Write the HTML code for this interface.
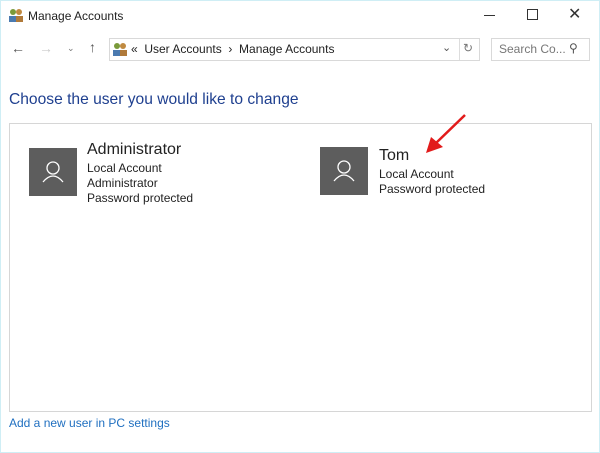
<!DOCTYPE html>
<html><head><style>
body{margin:0;width:600px;height:453px;background:#fff;font-family:"Liberation Sans",sans-serif;position:relative;overflow:hidden;border:1px solid #cfeef5;box-sizing:border-box}
.a{position:absolute}
.av{position:absolute;width:48px;height:48px;background:#5d5d5d}
.t{color:#222;font-size:12px;line-height:15px}
</style></head><body>
<svg class="a" style="left:7px;top:6px" width="16" height="16"><circle cx="5" cy="5" r="3" fill="#7a9a3a"/><circle cx="11" cy="5" r="3" fill="#c08a40"/><rect x="1" y="9" width="8" height="6" fill="#4a7ab0"/><rect x="8" y="9" width="7" height="6" fill="#b07a3a"/></svg>
<div class="a" style="left:27px;top:8px;font-size:12px;color:#222">Manage Accounts</div>
<div class="a" style="left:483px;top:14px;width:11px;height:1px;background:#333"></div>
<div class="a" style="left:526px;top:8px;width:9px;height:9px;border:1px solid #333"></div>
<div class="a" style="left:567px;top:3px;font-size:16px;color:#333">✕</div>
<div class="a" style="left:10px;top:39px;font-size:14px;color:#555">←</div>
<div class="a" style="left:38px;top:39px;font-size:14px;color:#ccc">→</div>
<div class="a" style="left:66px;top:42px;font-size:9px;color:#777">⌄</div>
<div class="a" style="left:88px;top:38px;font-size:14px;color:#555">↑</div>
<div class="a" style="left:108px;top:37px;width:369px;height:21px;border:1px solid #d9d9d9"></div>
<svg class="a" style="left:111px;top:40px" width="16" height="16"><circle cx="5" cy="5" r="3" fill="#7a9a3a"/><circle cx="11" cy="5" r="3" fill="#c08a40"/><rect x="1" y="9" width="8" height="6" fill="#4a7ab0"/><rect x="8" y="9" width="7" height="6" fill="#b07a3a"/></svg>
<div class="a" style="left:130px;top:41px;font-size:12px;color:#222">«&nbsp; User Accounts &nbsp;›&nbsp; Manage Accounts</div>
<div class="a" style="left:441px;top:40px;font-size:11px;color:#555">⌄</div>
<div class="a" style="left:458px;top:38px;width:1px;height:21px;background:#ddd"></div>
<div class="a" style="left:462px;top:40px;font-size:12px;color:#777">↻</div>
<div class="a" style="left:490px;top:37px;width:97px;height:21px;border:1px solid #d9d9d9"></div>
<div class="a" style="left:498px;top:41px;font-size:12px;color:#777">Search Co...</div>
<div class="a" style="left:568px;top:40px;font-size:12px;color:#555">⚲</div>
<div class="a" style="left:8px;top:90px;font-size:15.6px;color:#1e3f8f">Choose the user you would like to change</div>
<div class="a" style="left:8px;top:122px;width:581px;height:287px;border:1px solid #d6d6d6"></div>
<div class="av" style="left:28px;top:147px"></div>
<svg class="a" style="left:28px;top:147px" width="48" height="48"><circle cx="24" cy="20" r="6" fill="none" stroke="#fff" stroke-width="1.3"/><path d="M14 34 Q24 22 34 34" fill="none" stroke="#fff" stroke-width="1.3"/></svg>
<div class="a" style="left:86px;top:140px;font-size:16px;color:#222">Administrator</div>
<div class="a t" style="left:86px;top:160px">Local Account<br>Administrator<br>Password protected</div>
<div class="av" style="left:319px;top:146px"></div>
<svg class="a" style="left:319px;top:146px" width="48" height="48"><circle cx="24" cy="20" r="6" fill="none" stroke="#fff" stroke-width="1.3"/><path d="M14 34 Q24 22 34 34" fill="none" stroke="#fff" stroke-width="1.3"/></svg>
<div class="a" style="left:378px;top:146px;font-size:16px;color:#222">Tom</div>
<div class="a t" style="left:378px;top:166px">Local Account<br>Password protected</div>
<svg class="a" style="left:420px;top:110px" width="50" height="50"><line x1="44" y1="4" x2="14" y2="33" stroke="#e21b1b" stroke-width="2.5"/><polygon points="5,42 10,26 22,36" fill="#e21b1b"/></svg>
<div class="a" style="left:8px;top:415px;font-size:12px;color:#1f6fc0">Add a new user in PC settings</div>
</body></html>
